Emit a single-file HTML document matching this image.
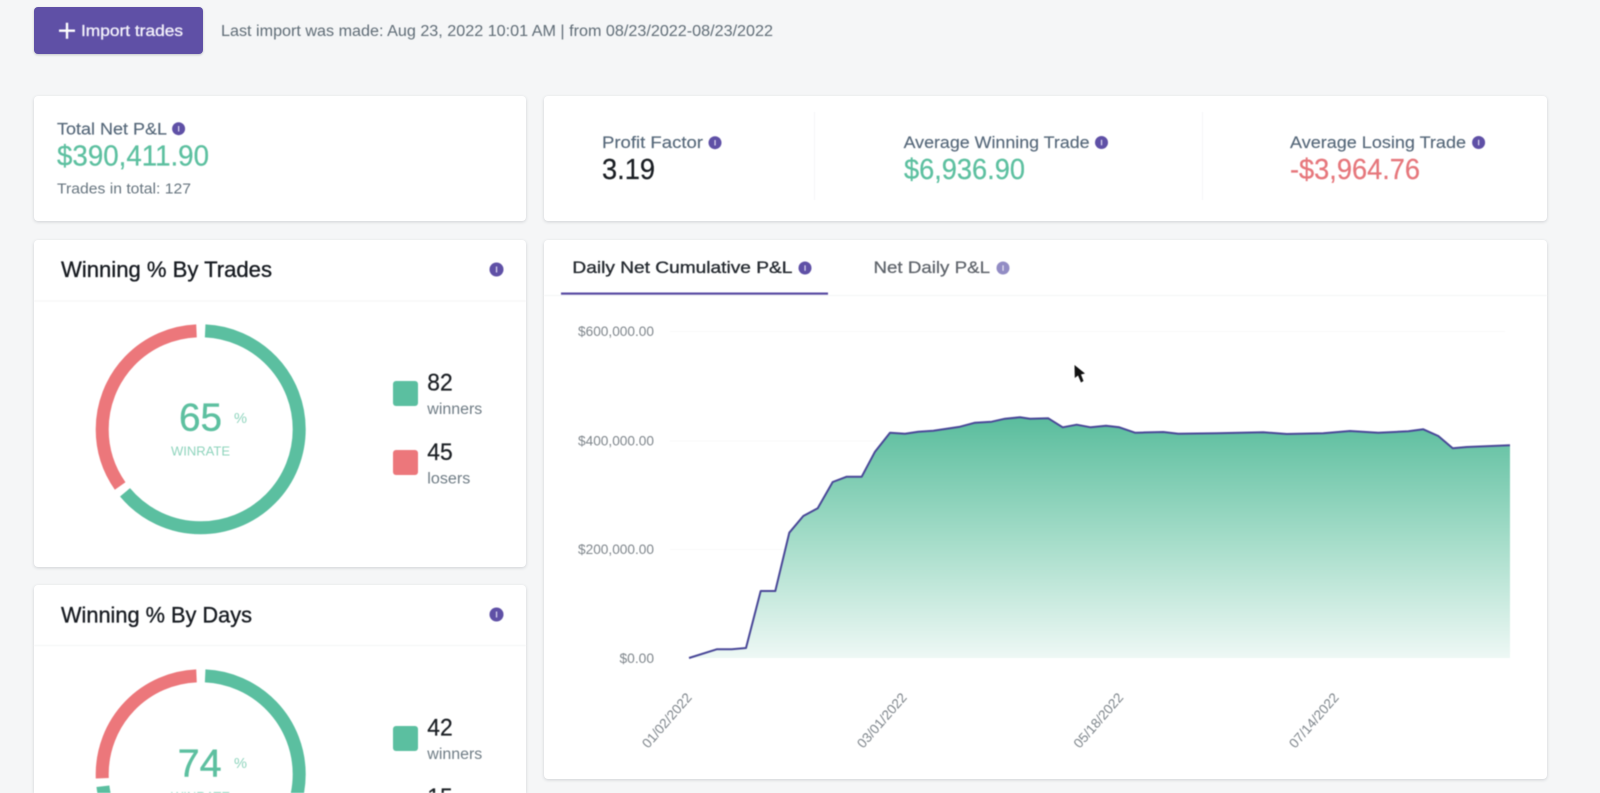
<!DOCTYPE html>
<html><head><meta charset="utf-8"><title>Dashboard</title>
<style>
html,body{margin:0;padding:0;width:1600px;height:793px;overflow:hidden;background:#f5f6f7}
#wrap{position:relative;width:1600px;height:793px;overflow:hidden;background:#f5f6f7}
svg{position:absolute;left:0;top:0;width:1600px;height:793px;overflow:hidden;filter:blur(.45px)}
text{font-family:"Liberation Sans",sans-serif}
.card{position:absolute;background:#fff;border-radius:4px;box-shadow:0 1px 3px rgba(40,50,60,.18)}
.lbl{font-size:17px;fill:#56687a;stroke:#56687a;stroke-width:.15}
.big{font-size:28.5px;stroke-width:.25}
.title{font-size:22.5px;fill:#181c22;stroke:#181c22;stroke-width:.35}
.ax{font-size:13.5px;fill:#7e858b}
.num{font-size:24px;fill:#1d2126;stroke:#1d2126;stroke-width:.25}
.sub{font-size:15.5px;fill:#6f7c85}
.g{fill:#5dc0a0;stroke:#5dc0a0}
.r{fill:#e6777c;stroke:#e6777c}
</style></head><body>
<div id="wrap">
<div class="card" style="left:34px;top:96px;width:492px;height:125px"></div>
<div class="card" style="left:544px;top:96px;width:1003px;height:125px"></div>
<div class="card" style="left:34px;top:240px;width:492px;height:327px"></div>
<div class="card" style="left:34px;top:585px;width:492px;height:208px;border-radius:4px 4px 0 0"></div>
<div class="card" style="left:544px;top:240px;width:1003px;height:539px"></div>
<div style="position:absolute;left:34px;top:7px;width:169px;height:47px;border-radius:4px;background:#5f50a6;box-shadow:0 1px 2px rgba(40,50,60,.25)"></div>
<svg width="1600" height="793" viewBox="0 0 1600 793" xmlns="http://www.w3.org/2000/svg">
<defs><linearGradient id="ag" gradientUnits="userSpaceOnUse" x1="0" y1="417" x2="0" y2="658">
<stop offset="0" stop-color="#5abd9d"/><stop offset=".5" stop-color="#a3dcc8"/><stop offset="1" stop-color="#eef8f5"/></linearGradient></defs>

<path d="M59 30.7H75M67 22.7V38.7" stroke="#fff" stroke-width="2.4" fill="none"/>
<text x="81" y="36" font-size="16" fill="#f2f0fa" textLength="102" lengthAdjust="spacingAndGlyphs" style="stroke:#f2f0fa;stroke-width:.35">Import trades</text>
<text x="221" y="36" font-size="15.5" fill="#5f6c76" textLength="552" lengthAdjust="spacingAndGlyphs">Last import was made: Aug 23, 2022 10:01 AM | from 08/23/2022-08/23/2022</text>

<text class="lbl" x="57" y="134.5" textLength="110" lengthAdjust="spacingAndGlyphs">Total Net P&amp;L</text>
<circle cx="178.6" cy="128.7" r="6.5" fill="#5f50a6"/><rect x="178" y="126" width="1.3" height="5.5" fill="#d8d4ee"/>
<text class="big g" x="57" y="165.5" textLength="152" lengthAdjust="spacingAndGlyphs">$390,411.90</text>
<text x="57" y="193.5" font-size="15" fill="#67757f" textLength="134" lengthAdjust="spacingAndGlyphs">Trades in total: 127</text>

<text class="lbl" x="602" y="148" textLength="101" lengthAdjust="spacingAndGlyphs">Profit Factor</text>
<circle cx="715" cy="142.7" r="6.5" fill="#5f50a6"/><rect x="714.4" y="140" width="1.3" height="5.5" fill="#d8d4ee"/>
<text class="big" x="602" y="179" fill="#1a1e23" stroke="#1a1e23" textLength="53" lengthAdjust="spacingAndGlyphs">3.19</text>

<rect x="814" y="112" width="1" height="88" fill="#f5f6f7"/>
<rect x="1202" y="112" width="1" height="88" fill="#f5f6f7"/>

<text class="lbl" x="903.6" y="148" textLength="186" lengthAdjust="spacingAndGlyphs">Average Winning Trade</text>
<circle cx="1101.5" cy="142.5" r="6.5" fill="#5f50a6"/><rect x="1100.9" y="139.8" width="1.3" height="5.5" fill="#d8d4ee"/>
<text class="big g" x="904" y="179" textLength="121" lengthAdjust="spacingAndGlyphs">$6,936.90</text>

<text class="lbl" x="1290" y="148" textLength="176" lengthAdjust="spacingAndGlyphs">Average Losing Trade</text>
<circle cx="1478.6" cy="142.5" r="6.5" fill="#5f50a6"/><rect x="1478" y="139.8" width="1.3" height="5.5" fill="#d8d4ee"/>
<text class="big r" x="1290" y="179" textLength="130" lengthAdjust="spacingAndGlyphs">-$3,964.76</text>

<text class="title" x="61" y="277" textLength="211" lengthAdjust="spacingAndGlyphs">Winning % By Trades</text>
<circle cx="496.5" cy="269.5" r="7" fill="#5f50a6"/><rect x="495.9" y="266.5" width="1.3" height="6" fill="#d8d4ee"/>
<rect x="34" y="300.5" width="492" height="1" fill="#f4f5f6"/>
<g fill="none" stroke-width="13" transform="rotate(-90 200.7 429.3)">
<circle cx="200.7" cy="429.3" r="98.5" stroke="#5bbfa0" stroke-dasharray="0 4.5 391.1 1000"/>
<circle cx="200.7" cy="429.3" r="98.5" stroke="#ec777b" stroke-dasharray="0 403.6 210.8 1000"/>
</g>
<text x="179" y="430.7" font-size="39" class="g" textLength="43" lengthAdjust="spacingAndGlyphs" stroke-width=".4">65</text>
<text x="234" y="423" font-size="15" fill="#8fd4bd" textLength="13" lengthAdjust="spacingAndGlyphs">%</text>
<text x="171" y="455.5" font-size="13" fill="#8fd4bd" textLength="59" lengthAdjust="spacingAndGlyphs">WINRATE</text>
<rect x="393" y="381" width="25" height="25" rx="3" fill="#5bbfa0"/>
<text class="num" x="427.3" y="390.7" textLength="25.4" lengthAdjust="spacingAndGlyphs">82</text>
<text class="sub" x="427.3" y="414" textLength="55" lengthAdjust="spacingAndGlyphs">winners</text>
<rect x="393" y="450" width="25" height="25" rx="3" fill="#ec777b"/>
<text class="num" x="427.3" y="460" textLength="25.4" lengthAdjust="spacingAndGlyphs">45</text>
<text class="sub" x="427.3" y="483.3" textLength="43" lengthAdjust="spacingAndGlyphs">losers</text>

<text class="title" x="61" y="622.5" textLength="191" lengthAdjust="spacingAndGlyphs">Winning % By Days</text>
<circle cx="496.5" cy="614.5" r="7" fill="#5f50a6"/><rect x="495.9" y="611.5" width="1.3" height="6" fill="#d8d4ee"/>
<rect x="34" y="645" width="492" height="1" fill="#f4f5f6"/>
<g fill="none" stroke-width="13" transform="rotate(-90 200.7 774.3)">
<circle cx="200.7" cy="774.3" r="98.5" stroke="#5bbfa0" stroke-dasharray="0 4.5 447.5 1000"/>
<circle cx="200.7" cy="774.3" r="98.5" stroke="#ec777b" stroke-dasharray="0 460 154.4 1000"/>
</g>
<text x="177.7" y="776.7" font-size="39" class="g" textLength="44" lengthAdjust="spacingAndGlyphs" stroke-width=".4">74</text>
<text x="234" y="768" font-size="15" fill="#8fd4bd" textLength="13" lengthAdjust="spacingAndGlyphs">%</text>
<text x="171" y="801" font-size="13" fill="#8fd4bd" textLength="59" lengthAdjust="spacingAndGlyphs">WINRATE</text>
<rect x="393" y="726" width="25" height="25" rx="3" fill="#5bbfa0"/>
<text class="num" x="427.3" y="735.7" textLength="25.4" lengthAdjust="spacingAndGlyphs">42</text>
<text class="sub" x="427.3" y="759" textLength="55" lengthAdjust="spacingAndGlyphs">winners</text>
<text class="num" x="427.3" y="805" textLength="25.4" lengthAdjust="spacingAndGlyphs">15</text>

<text x="572.4" y="272.8" font-size="17" fill="#262b31" textLength="220" lengthAdjust="spacingAndGlyphs" style="stroke:#262b31;stroke-width:.35">Daily Net Cumulative P&amp;L</text>
<circle cx="805" cy="268" r="6.5" fill="#5f50a6"/><rect x="804.4" y="265.3" width="1.3" height="5.5" fill="#d8d4ee"/>
<text x="873.5" y="272.8" font-size="17" fill="#5f646b" textLength="116.5" lengthAdjust="spacingAndGlyphs" style="stroke:#5f646b;stroke-width:.25">Net Daily P&amp;L</text>
<circle cx="1003" cy="268" r="6.5" fill="#928cc4"/><rect x="1002.4" y="265.3" width="1.3" height="5.5" fill="#e4e2f2"/>
<rect x="544" y="295" width="1003" height="1" fill="#f4f5f6"/>
<rect x="561" y="292.5" width="267" height="2.2" fill="#5a4ba3"/>

<path d="M670 331.5H1505M670 441H1505M670 549.5H1505" stroke="#f8f8f9" stroke-width="1" fill="none"/>
<text class="ax" x="654" y="336" text-anchor="end" textLength="76" lengthAdjust="spacingAndGlyphs">$600,000.00</text>
<text class="ax" x="654" y="445.5" text-anchor="end" textLength="76" lengthAdjust="spacingAndGlyphs">$400,000.00</text>
<text class="ax" x="654" y="554" text-anchor="end" textLength="76" lengthAdjust="spacingAndGlyphs">$200,000.00</text>
<text class="ax" x="654" y="663" text-anchor="end" textLength="34.5" lengthAdjust="spacingAndGlyphs">$0.00</text>

<path fill="url(#ag)" d="M689 658L716.7 649.3L731.7 649.3L746 648L760.7 591L775.3 591L789.3 532.7L803.3 516L817.7 508.3L832.7 482L846.7 476.7L861.7 476.7L875 451.7L890 432.7L905 433.7L918.3 431.7L933.3 430.7L960 426.7L975 422.7L991.7 421.7L1005 418.7L1020 417.3L1030 418.7L1048.3 418.3L1062.7 427.3L1076.7 424.7L1090.7 427.3L1106 425.7L1119.3 427.3L1135 432.7L1163.3 432L1178.3 433.7L1216.7 433.3L1263.3 432.3L1286.7 434L1323.3 433.3L1350 431L1378.3 432.7L1408.3 431.3L1423.3 429.3L1438.3 436L1452.7 448.3L1466.7 447L1510 445.3V658Z"/>
<path fill="none" stroke="#4a4898" stroke-width="2" stroke-linejoin="round" d="M689 658L716.7 649.3L731.7 649.3L746 648L760.7 591L775.3 591L789.3 532.7L803.3 516L817.7 508.3L832.7 482L846.7 476.7L861.7 476.7L875 451.7L890 432.7L905 433.7L918.3 431.7L933.3 430.7L960 426.7L975 422.7L991.7 421.7L1005 418.7L1020 417.3L1030 418.7L1048.3 418.3L1062.7 427.3L1076.7 424.7L1090.7 427.3L1106 425.7L1119.3 427.3L1135 432.7L1163.3 432L1178.3 433.7L1216.7 433.3L1263.3 432.3L1286.7 434L1323.3 433.3L1350 431L1378.3 432.7L1408.3 431.3L1423.3 429.3L1438.3 436L1452.7 448.3L1466.7 447L1510 445.3"/>

<text class="ax" style="font-size:13.5px" text-anchor="end" transform="translate(692.5 698) rotate(-49)">01/02/2022</text>
<text class="ax" style="font-size:13.5px" text-anchor="end" transform="translate(907.5 698) rotate(-49)">03/01/2022</text>
<text class="ax" style="font-size:13.5px" text-anchor="end" transform="translate(1124 698) rotate(-49)">05/18/2022</text>
<text class="ax" style="font-size:13.5px" text-anchor="end" transform="translate(1339.5 698) rotate(-49)">07/14/2022</text>

<path d="M1074.5 365L1074.8 378L1078 375.5L1081 382.5L1083.5 381L1081 374.5L1085 373.5Z" fill="#111"/>
</svg>
</div>
</body></html>
